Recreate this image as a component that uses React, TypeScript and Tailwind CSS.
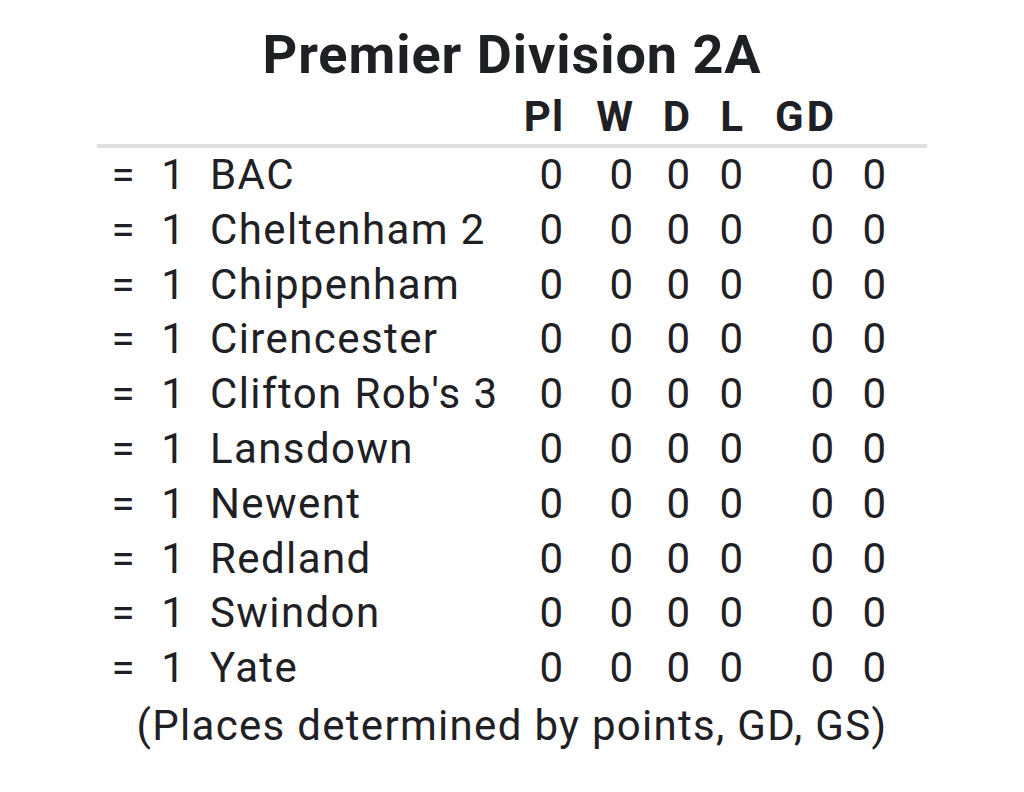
const teams = [
  "BAC",
  "Cheltenham 2",
  "Chippenham",
  "Cirencester",
  "Clifton Rob's 3",
  "Lansdown",
  "Newent",
  "Redland",
  "Swindon",
  "Yate",
];

const cols = "grid grid-cols-[52px_48px_303px_63px_70px_57px_53px_91px_52px_1fr]";

export default function App() {
  return (
    <div className="min-h-[792px] bg-white text-[#1f2023] font-['Roboto',sans-serif]">
      <div className="mx-auto w-[830px] pt-[23px]">
        <h1 className="text-center text-[54px] leading-[63px] font-bold tracking-[0.95px]">Premier Division 2A</h1>

        <div className={`${cols} mt-[4px] text-[42px] leading-[54px] font-bold border-b-4 border-[#dedee3]`}>
          <span />
          <span />
          <span />
          <span className="text-right tracking-[1px] -mr-[1px]">Pl</span>
          <span className="text-right tracking-[1.5px] -mr-[1.5px]">W</span>
          <span className="text-right tracking-[1.5px] -mr-[1.5px]">D</span>
          <span className="text-right">L</span>
          <span className="text-right tracking-[3px] -mr-[3px]">GD</span>
          <span />
          <span />
        </div>

        {teams.map((team) => (
          <div key={team} className={`${cols} text-[42px] leading-[54.8px]`}>
            <span className="text-center">=</span>
            <span className="text-center">1</span>
            <span className="pl-[13px] whitespace-nowrap tracking-[1.4px]">{team}</span>
            <span className="text-right">0</span>
            <span className="text-right">0</span>
            <span className="text-right">0</span>
            <span className="text-right">0</span>
            <span className="text-right">0</span>
            <span className="text-right">0</span>
            <span />
          </div>
        ))}

        <p className="mt-[3px] text-center text-[42px] leading-[54.8px] tracking-[1.3px]">
          (Places determined by points, GD, GS)
        </p>
      </div>
    </div>
  );
}
